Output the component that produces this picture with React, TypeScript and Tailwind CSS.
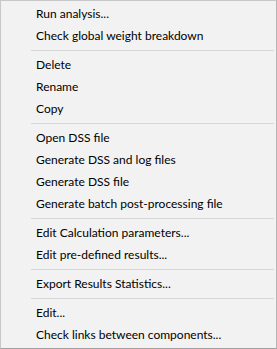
import React from "react";

type Entry = string | null;

const entries: Entry[] = [
  "Run analysis...",
  "Check global weight breakdown",
  null,
  "Delete",
  "Rename",
  "Copy",
  null,
  "Open DSS file",
  "Generate DSS and log files",
  "Generate DSS file",
  "Generate batch post-processing file",
  null,
  "Edit Calculation parameters...",
  "Edit pre-defined results...",
  null,
  "Export Results Statistics...",
  null,
  "Edit...",
  "Check links between components...",
];

export default function App() {
  return (
    <div
      className="w-[277px] h-[349px] bg-[#f2f2f2] border border-[#c8c8c8] border-b-[#a0a0a0] border-r-[#b4b4b4] pt-[2px] text-[#000000] text-[12px]"
      style={{ fontFamily: 'Lato, "Noto Sans", sans-serif' }}
    >
      {entries.map((e, i) =>
        e === null ? (
          <div key={i} className="h-[7px] flex items-center pl-[30px] pr-[2px]">
            <div className="h-px w-full bg-[#d7d7d7]" />
          </div>
        ) : (
          <div key={i} className="h-[22px] flex items-center pl-[35px] whitespace-nowrap leading-none">
            {e}
          </div>
        )
      )}
    </div>
  );
}
